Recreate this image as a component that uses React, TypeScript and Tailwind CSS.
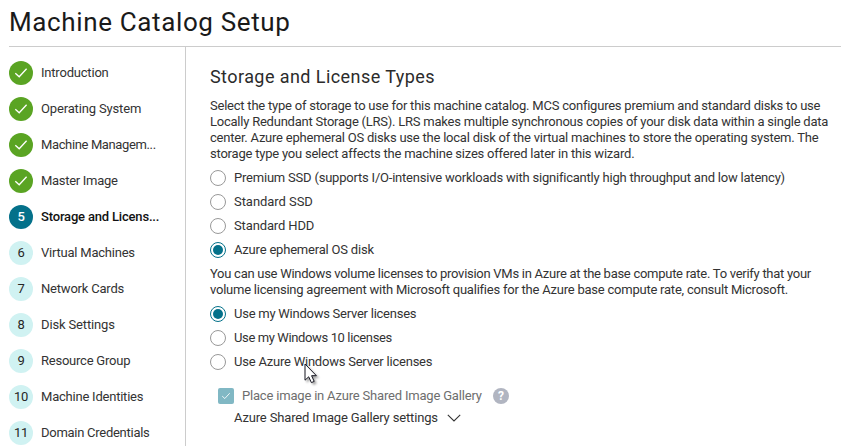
import type { ReactNode } from "react";

type Step = { label: string; state: "done" | "current" | "todo"; tracking: string };

const steps: Step[] = [
  { label: "Introduction", state: "done", tracking: "tracking-[-0.2px]" },
  { label: "Operating System", state: "done", tracking: "tracking-[-0.15px]" },
  { label: "Machine Managem...", state: "done", tracking: "tracking-[-0.37px]" },
  { label: "Master Image", state: "done", tracking: "tracking-[-0.3px]" },
  { label: "Storage and Licens...", state: "current", tracking: "tracking-[-0.18px]" },
  { label: "Virtual Machines", state: "todo", tracking: "tracking-[-0.22px]" },
  { label: "Network Cards", state: "todo", tracking: "tracking-[-0.2px]" },
  { label: "Disk Settings", state: "todo", tracking: "tracking-[-0.15px]" },
  { label: "Resource Group", state: "todo", tracking: "tracking-[-0.23px]" },
  { label: "Machine Identities", state: "todo", tracking: "tracking-[-0.22px]" },
  { label: "Domain Credentials", state: "todo", tracking: "tracking-[-0.27px]" },
];

const badgeColor = {
  done: "bg-[#5aa423]",
  current: "bg-[#04718a] text-white font-medium",
  todo: "bg-[#d0f2f2] text-[#262626]",
};

function Check({ className }: { className: string }) {
  return (
    <svg viewBox="0 0 24 24" className={className} fill="none" stroke="white" strokeWidth="1.3">
      <path d="M6.3 12.2 L10.2 15.8 L17.6 7.8" />
    </svg>
  );
}

function StepItem({ step, index }: { step: Step; index: number }) {
  return (
    <li className="flex h-6 items-center gap-2">
      <span className={`flex size-6 shrink-0 items-center justify-center rounded-full text-[13px] leading-6 tracking-[-0.3px] ${badgeColor[step.state]}`}>
        {step.state === "done" ? <Check className="size-6" /> : <span className="-mt-px">{index + 1}</span>}
      </span>
      <span className={`whitespace-nowrap text-[13px] leading-4 ${step.tracking} ${step.state === "current" ? "font-medium text-[#111]" : "text-[#333]"}`}>
        {step.label}
      </span>
    </li>
  );
}

function Radio({ checked = false, tracking, children }: { checked?: boolean; tracking: string; children: ReactNode }) {
  return (
    <label className="flex h-6 items-center gap-2">
      <span className={`flex size-4 items-center justify-center rounded-full border ${checked ? "border-[#04718a]" : "border-[#999]"}`}>
        {checked && <span className="size-2.5 rounded-full bg-[#04718a]" />}
      </span>
      <span className={`-mt-px whitespace-nowrap leading-4 ${tracking}`}>{children}</span>
    </label>
  );
}

function Pointer() {
  return (
    <svg viewBox="0 0 15 22" className="absolute left-[304px] top-[363px] h-[22px] w-[15px] drop-shadow-[2px_2px_1px_rgba(0,0,0,0.35)]">
      <path d="M1 1 V17.2 L4.7 13.8 L7.4 19.6 L10.2 18.4 L7.6 12.7 H12.4 Z" fill="white" stroke="#161621" strokeWidth="1" />
    </svg>
  );
}

export default function App() {
  return (
    <div className="relative flex h-[446px] w-[854px] flex-col overflow-hidden bg-white pl-[9px] pr-[13px] font-['Roboto','Liberation_Sans',sans-serif] text-[13px] text-[#333]">
      <header className="h-[47px] shrink-0 border-b border-[#ccc]">
        <h1 className="pt-1.5 text-[26px] leading-8 tracking-[0.63px] text-[#1a1a1a]">Machine Catalog Setup</h1>
      </header>
      <div className="flex min-h-0 flex-1">
        <ol className="flex w-[177px] shrink-0 flex-col gap-3 border-r border-[#ccc] pt-3.5">
          {steps.map((step, i) => (
            <StepItem key={step.label} step={step} index={i} />
          ))}
        </ol>
        <main className="pl-6 pt-[19px]">
          <h2 className="h-8 text-[18px] leading-[22px] tracking-[0.43px] text-[#2b2b2b]">Storage and License Types</h2>
          <div className="h-[68px] whitespace-nowrap leading-4">
            <p className="tracking-[-0.225px]">Select the type of storage to use for this machine catalog. MCS configures premium and standard disks to use</p>
            <p className="tracking-[-0.23px]">Locally Redundant Storage (LRS). LRS makes multiple synchronous copies of your disk data within a single data</p>
            <p className="tracking-[-0.22px]">center. Azure ephemeral OS disks use the local disk of the virtual machines to store the operating system. The</p>
            <p className="tracking-[-0.215px]">storage type you select affects the machine sizes offered later in this wizard.</p>
          </div>
          <Radio tracking="tracking-[-0.21px]">Premium SSD (supports I/O-intensive workloads with significantly high throughput and low latency)</Radio>
          <Radio tracking="tracking-[-0.05px]">Standard SSD</Radio>
          <Radio tracking="tracking-[-0.13px]">Standard HDD</Radio>
          <Radio checked tracking="tracking-[-0.2px]">Azure ephemeral OS disk</Radio>
          <div className="h-10 whitespace-nowrap pt-1 leading-4">
            <p className="tracking-[-0.275px]">You can use Windows volume licenses to provision VMs in Azure at the base compute rate. To verify that your</p>
            <p className="tracking-[-0.228px]">volume licensing agreement with Microsoft qualifies for the Azure base compute rate, consult Microsoft.</p>
          </div>
          <Radio checked tracking="tracking-[-0.25px]">Use my Windows Server licenses</Radio>
          <Radio tracking="tracking-[-0.38px]">Use my Windows 10 licenses</Radio>
          <Radio tracking="tracking-[-0.22px]">Use Azure Windows Server licenses</Radio>
          <div className="mt-2.5 flex h-6 items-center pl-2">
            <span className="flex size-4 items-center justify-center rounded-[2px] bg-[#81b8c4]">
              <Check className="size-[18px]" />
            </span>
            <span className="-mt-px ml-2 w-[240px] whitespace-nowrap leading-4 tracking-[-0.19px] text-[#6e6e6e]">Place image in Azure Shared Image Gallery</span>
            <span className="ml-[11px] flex size-4 items-center justify-center rounded-full bg-[#b1b5c1] text-[12px] font-bold leading-4 text-white">?</span>
          </div>
          <div className="flex items-center pl-6">
            <span className="w-[204px] whitespace-nowrap leading-5 tracking-[-0.15px]">Azure Shared Image Gallery settings</span>
            <svg viewBox="0 0 14 8" className="ml-[9px] h-2 w-3.5" fill="none" stroke="#333" strokeWidth="1.1">
              <path d="M0.8 0.9 L7 7 L13.2 0.9" />
            </svg>
          </div>
        </main>
      </div>
      <Pointer />
    </div>
  );
}
